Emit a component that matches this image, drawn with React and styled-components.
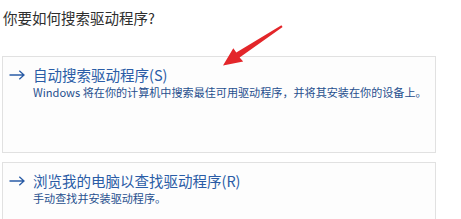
import styled, { createGlobalStyle } from "styled-components";

const GlobalStyle = createGlobalStyle`
  html, body { margin: 0; padding: 0; background: #ffffff; }
  body { font-family: "Noto Sans CJK SC", "Noto Sans", sans-serif; }
`;

const Page = styled.div`
  position: relative;
  width: 461px;
  height: 219px;
  overflow: hidden;
  padding: 8px 0 0 2px;
  box-sizing: border-box;
`;

const Heading = styled.div`
  margin-left: 1px;
  font-size: 14.5px;
  line-height: 20px;
  color: #2e2e2e;
`;

const OptionList = styled.div`
  display: flex;
  flex-direction: column;
  gap: 9px;
  margin-top: 28px;
`;

const OptionCard = styled.div`
  width: 434px;
  height: ${(p) => p.h}px;
  box-sizing: border-box;
  border: 1px solid #e1e1e1;
  background: #fdfdfd;
  padding: 9px 0 0 6px;
`;

const OptionTitle = styled.div`
  display: flex;
  align-items: center;
  gap: 8px;
  font-size: 14.5px;
  line-height: 18px;
  color: #2a5ca6;
`;

const OptionDesc = styled.div`
  margin-left: 24px;
  font-size: 11.1px;
  line-height: 16px;
  color: #264f8e;
  white-space: nowrap;
`;

const Pointer = styled.svg`
  position: absolute;
  left: 0;
  top: 0;
  pointer-events: none;
`;

const BlueArrow = () => (
  <svg width="16" height="10" viewBox="0 0 16 10">
    <path d="M0.5 5H15M10.3 0.8L15 5L10.3 9.2" fill="none" stroke="#2a5ca6" strokeWidth="1.3" />
  </svg>
);

const OPTIONS = [
  {
    title: "自动搜索驱动程序(S)",
    desc: "Windows 将在你的计算机中搜索最佳可用驱动程序，并将其安装在你的设备上。",
    h: 97,
  },
  {
    title: "浏览我的电脑以查找驱动程序(R)",
    desc: "手动查找并安装驱动程序。",
    h: 80,
  },
];

export default function App() {
  return (
    <>
      <GlobalStyle />
      <Page>
        <Heading>你要如何搜索驱动程序?</Heading>
        <OptionList>
          {OPTIONS.map((o) => (
            <OptionCard key={o.title} h={o.h}>
              <OptionTitle>
                <BlueArrow />
                {o.title}
              </OptionTitle>
              <OptionDesc>{o.desc}</OptionDesc>
            </OptionCard>
          ))}
        </OptionList>
        <Pointer width="461" height="219" viewBox="0 0 461 219">
          <polygon
            points="223,65.5 243.2,61.5 239.6,57.4 282.6,27 281.4,25.2 236.3,52.6 233.3,48.2"
            fill="#e3262a"
          />
        </Pointer>
      </Page>
    </>
  );
}
